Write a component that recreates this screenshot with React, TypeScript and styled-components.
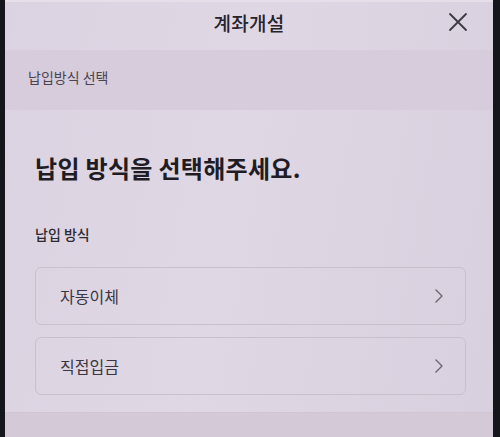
import styled, { createGlobalStyle } from "styled-components";

const GlobalStyle = createGlobalStyle`
  html, body {
    margin: 0;
    padding: 0;
    background: #15151c;
  }
  body {
    font-family: "Noto Sans CJK KR", "Noto Sans", sans-serif;
    color: #24212a;
  }
`;

const Screen = styled.div`
  width: 500px;
  height: 437px;
  box-sizing: border-box;
  padding: 0 7px 0 5px;
  background: #15151c;
`;

const Page = styled.div`
  height: 100%;
  display: flex;
  flex-direction: column;
  overflow: hidden;
  background: linear-gradient(100deg, #dcd3e2 0%, #dfd7e4 45%, #d9d0df 100%);
`;

const Header = styled.header`
  height: 50px;
  flex-shrink: 0;
  box-sizing: border-box;
  padding-bottom: 8px;
  display: grid;
  grid-template-columns: 60px 1fr 60px;
  align-items: center;
  border-top: 2px solid #e6dfea;
`;

const Title = styled.h1`
  grid-column: 2;
  margin: 0;
  text-align: center;
  font-size: 19px;
  font-weight: 500;
  color: #26232b;
  letter-spacing: 0.3px;
`;

const CloseButton = styled.button`
  justify-self: end;
  margin-right: 25px;
  border: 0;
  padding: 0;
  background: none;
  display: flex;
  color: #3c3942;
`;

const StepBar = styled.div`
  height: 60px;
  flex-shrink: 0;
  display: flex;
  align-items: center;
  padding: 0 0 6px 23px;
  box-sizing: border-box;
  background: #d6ccdb;
  font-size: 14px;
  color: #4a4550;
`;

const Body = styled.main`
  flex: 1;
  display: flex;
  flex-direction: column;
  padding: 40px 27px 0 30px;
`;

const Heading = styled.h2`
  margin: 0;
  font-size: 24px;
  font-weight: 700;
  color: #1f1c25;
  letter-spacing: 0.3px;
`;

const Label = styled.div`
  margin-top: 39px;
  font-size: 14px;
  font-weight: 500;
  color: #2d2a32;
`;

const OptionList = styled.div`
  margin-top: 23px;
  display: flex;
  flex-direction: column;
  gap: 12px;
`;

const Option = styled.button`
  height: 58px;
  display: flex;
  align-items: center;
  justify-content: space-between;
  padding: 0 20px 0 24px;
  border: 1px solid #c9c0cd;
  border-radius: 6px;
  background: transparent;
  font-family: inherit;
  font-size: 16px;
  color: #3a363f;
  text-align: left;
`;

const Chevron = styled.svg`
  width: 12px;
  height: 16px;
  color: #6a6570;
`;

const FooterBand = styled.div`
  height: 24px;
  flex-shrink: 0;
  background: #d3c9d7;
  border-top: 1px solid #d0c6d4;
`;

const options = ["자동이체", "직접입금"];

export default function App() {
  return (
    <>
      <GlobalStyle />
      <Screen>
        <Page>
          <Header>
            <Title>계좌개설</Title>
            <CloseButton aria-label="닫기">
              <svg width="20" height="20" viewBox="0 0 20 20" fill="none">
                <path d="M2 2L18 18M18 2L2 18" stroke="currentColor" strokeWidth="1.8" strokeLinecap="round" />
              </svg>
            </CloseButton>
          </Header>
          <StepBar>납입방식 선택</StepBar>
          <Body>
            <Heading>납입 방식을 선택해주세요.</Heading>
            <Label>납입 방식</Label>
            <OptionList>
              {options.map((name) => (
                <Option key={name}>
                  {name}
                  <Chevron viewBox="0 0 12 16" fill="none">
                    <path d="M3 2L9 8L3 14" stroke="currentColor" strokeWidth="1.4" strokeLinecap="round" strokeLinejoin="round" />
                  </Chevron>
                </Option>
              ))}
            </OptionList>
          </Body>
          <FooterBand />
        </Page>
      </Screen>
    </>
  );
}
